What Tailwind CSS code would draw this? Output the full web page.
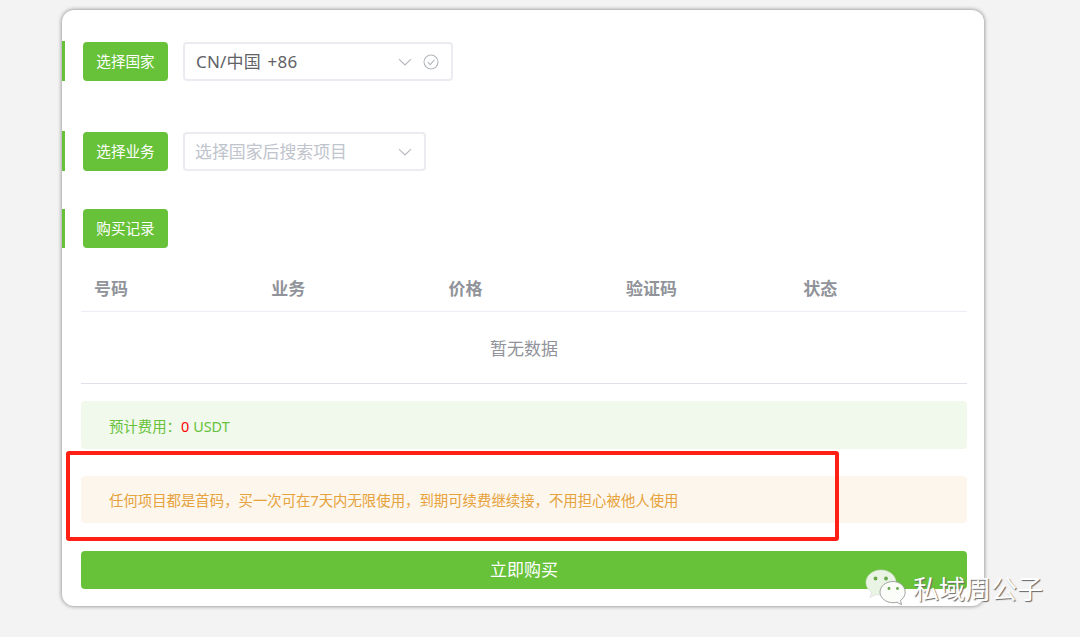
<!DOCTYPE html>
<html lang="zh-CN">
<head>
    <meta charset="UTF-8">
    <meta name="viewport" content="width=device-width, initial-scale=1.0">
    <title>购买</title>
    <script src="https://cdn.jsdelivr.net/npm/@tailwindcss/browser@4"></script>
</head>
<body class="relative h-[637px] w-[1080px] overflow-hidden bg-[#f3f3f3] font-['Noto_Sans','Noto_Sans_CJK_SC',sans-serif]">

    <!-- Card -->
    <div class="absolute left-[62px] top-[10px] h-[596px] w-[922px] rounded-[12px] bg-white pt-[31px] shadow-[0_0_4px_rgba(0,0,0,0.5)]">

        <!-- Country -->
        <div class="flex h-[40px] items-end border-l-[3px] border-[#67c23a] pl-[18px]">
            <div class="flex h-[39px] w-[85px] items-center justify-center rounded-[4px] bg-[#67c23a] text-[14.6px] text-white">选择国家</div>
            <div class="ml-[15px] flex h-[39px] w-[270px] items-center rounded-[4px] border-2 border-[#eaecf1] pl-[11px] pr-[12px]">
                <span class="text-[17px] tracking-[0.2px] text-[#606266] [word-spacing:2px]">CN/中国 +86</span>
                <svg class="ml-auto" width="14" height="14" viewBox="0 0 14 14" fill="none" stroke="#b4b7bd" stroke-width="1.1"><path d="M1 4.200 7 10l6-5.800"/></svg>
                <svg class="ml-[11px]" width="16" height="16" viewBox="0 0 16 16" fill="none" stroke="#b4b7bd" stroke-width="1.1"><circle cx="8" cy="8" r="7"/><path d="M4.800 8.200 7.200 10.600 11.400 5.800"/></svg>
            </div>
        </div>

        <!-- Service -->
        <div class="mt-[50px] flex h-[40px] items-end border-l-[3px] border-[#67c23a] pl-[18px]">
            <div class="flex h-[39px] w-[85px] items-center justify-center rounded-[4px] bg-[#67c23a] text-[14.6px] text-white">选择业务</div>
            <div class="ml-[15px] flex h-[39px] w-[243px] items-center rounded-[4px] border-2 border-[#eaecf1] pl-[10px] pr-[12px]">
                <span class="text-[16.900px] text-[#c0c4cc]">选择国家后搜索项目</span>
                <svg class="ml-auto" width="14" height="14" viewBox="0 0 14 14" fill="none" stroke="#b4b7bd" stroke-width="1.1"><path d="M1 4.200 7 10l6-5.800"/></svg>
            </div>
        </div>

        <!-- Records -->
        <div class="mt-[38px] flex h-[39px] items-end border-l-[3px] border-[#67c23a] pl-[18px]">
            <div class="flex h-[39px] w-[85px] items-center justify-center rounded-[4px] bg-[#67c23a] text-[14.6px] text-white">购买记录</div>
        </div>

        <div class="ml-[19px] w-[886px]">
            <!-- Table -->
            <div class="mt-[1px] grid h-[63px] grid-cols-[repeat(5,177.3px)] items-center border-b border-[#ebeef5] pl-[13px] pt-[18px] text-[17px] font-bold text-[#909399]">
                <span>号码</span>
                <span>业务</span>
                <span>价格</span>
                <span>验证码</span>
                <span>状态</span>
            </div>
            <div class="flex h-[72px] items-center justify-center border-b border-[#dfe1e8] pt-[2px] text-[17px] text-[#909399]">暂无数据</div>

            <!-- Cost -->
            <div class="mt-[17px] flex h-[48px] items-center rounded-[4px] bg-[#f0f9eb] pl-[28px] pt-[3px] text-[14.400px] text-[#67c23a]">
                <span>预计费用：</span><span class="text-[#ff0000]">0</span><span class="ml-[4px]">USDT</span>
            </div>

            <!-- Notice -->
            <div class="mt-[27px] flex h-[47px] items-center rounded-[4px] bg-[#fdf6ec] pl-[28px] pt-[3px] text-[14.400px] text-[#e6a23c]">任何项目都是首码，买一次可在7天内无限使用，到期可续费继续接，不用担心被他人使用</div>

            <!-- Buy -->
            <div class="mt-[28px] flex h-[38px] items-center justify-center rounded-[4px] bg-[#67c23a] text-[17px] text-white">立即购买</div>
        </div>
    </div>

    <!-- Red annotation -->
    <div class="absolute left-[66px] top-[451px] h-[90px] w-[773px] rounded-[3px] border-4 border-[#ff2015]"></div>

    <!-- Watermark -->
    <div class="absolute left-[864px] top-[568px] flex h-[40px] items-center">
        <svg width="46" height="38" viewBox="0 0 46 38">
            <path d="M17 1C8.500 1 2 6.700 2 13.500c0 4 2.200 7.400 5.700 9.700L6 28.500l6.200-3.100c1.600.4 3.200.6 4.800.6 8.500 0 15-5.700 15-12.500S25.500 1 17 1Z" fill="#eaf4e4" stroke="#d8d8d8" stroke-width=".6"/>
            <circle cx="11.500" cy="9.500" r="1.900" fill="#67a84a"/>
            <circle cx="22" cy="9.500" r="1.900" fill="#67a84a"/>
            <path d="M29 12.500c-7.200 0-13 4.800-13 10.600S21.800 33.700 29 33.700c1.400 0 2.700-.2 4-.5l4.600 2.500-1.200-4.200c3-2 4.800-5 4.800-8.400 0-5.800-5.500-10.600-12.200-10.600Z" fill="#fbfdf9" stroke="#9a9a9a" stroke-width=".9"/>
            <circle cx="25" cy="19.500" r="1.400" fill="#67a84a"/>
            <circle cx="33.500" cy="19.500" r="1.400" fill="#67a84a"/>
        </svg>
        <span class="ml-[3px] mt-[1px] text-[26px] leading-none text-white [text-shadow:1px_1px_1px_#666]">私域周公子</span>
    </div>

</body>
</html>
